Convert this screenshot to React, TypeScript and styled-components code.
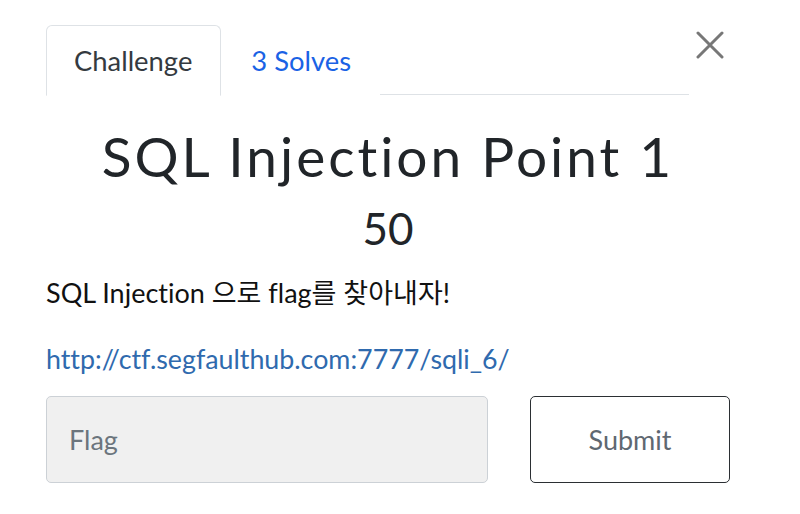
import React, {useState} from 'react';
import styled, {createGlobalStyle} from "styled-components";

const GlobalStyle = createGlobalStyle`
    body {
        margin: 0;
        background: #fff;
        font-family: Lato, "Noto Sans CJK KR", sans-serif;
        color: #212529;
        font-variant-ligatures: no-common-ligatures;
    }
`;

const Modal = styled.div`
    display: flex;
    flex-direction: column;
    width: 684px;
    padding: 25px 0 0 46px;
`;

const Header = styled.div`
    display: flex;
    align-items: flex-start;
    height: 70px;
`;

const TabNav = styled.div`
    display: flex;
    width: 643px;
    height: 70px;
    border-bottom: 1px solid #dee2e6;
    box-sizing: border-box;
`;

const Tab = styled.div<{ $active?: boolean }>`
    display: flex;
    align-items: center;
    justify-content: center;
    height: 71px;
    box-sizing: border-box;
    padding: 0 28px 0 ${p => p.$active ? 27 : 29}px;
    font-size: 27.4px;
    color: ${p => p.$active ? '#343a40' : '#1a62e5'};
    background: #fff;
    border: 1px solid ${p => p.$active ? '#dee2e6' : 'transparent'};
    border-bottom-color: ${p => p.$active ? '#fff' : 'transparent'};
    border-radius: 6px 6px 0 0;
    cursor: pointer;
`;

const CloseButton = styled.button`
    display: flex;
    margin: 6px 0 0 7px;
    padding: 0;
    border: 0;
    background: none;
    cursor: pointer;
`;

const Title = styled.h1`
    margin: 28px 0 0;
    text-align: center;
    font-size: 55px;
    font-weight: 400;
    letter-spacing: 3px;
    line-height: 66px;
`;

const Points = styled.h2`
    margin: 13px 0 0;
    text-align: center;
    font-size: 44px;
    font-weight: 400;
    line-height: 52px;
`;

const Description = styled.p`
    margin: 21px 0 0;
    font-size: 27px;
    line-height: 36px;
    color: #111;
`;

const Link = styled.a`
    margin-top: 30px;
    font-size: 26.8px;
    line-height: 36px;
    color: #2f6aae;
    text-decoration: none;
`;

const Form = styled.form`
    display: flex;
    justify-content: space-between;
    margin-top: 19px;
`;

const FlagInput = styled.input`
    width: 442px;
    height: 87px;
    box-sizing: border-box;
    padding: 0 22px;
    font-family: inherit;
    font-size: 27px;
    color: #495057;
    background: #f0f0f0;
    border: 1px solid #ccd1d6;
    border-radius: 5px;
    outline: none;

    &::placeholder {
        color: #6c757d;
    }
`;

const SubmitButton = styled.button`
    width: 200px;
    height: 87px;
    font-family: inherit;
    font-size: 27px;
    color: #5f6871;
    background: #fff;
    border: 1px solid #2b2f33;
    border-radius: 5px;
    cursor: pointer;
`;

function App() {
    const [tab, setTab] = useState('challenge');
    const [flag, setFlag] = useState('');
    return (
        <>
            <GlobalStyle/>
            <Modal>
                <Header>
                    <TabNav>
                        <Tab $active={tab === 'challenge'} onClick={() => setTab('challenge')}>Challenge</Tab>
                        <Tab $active={tab === 'solves'} onClick={() => setTab('solves')}>3 Solves</Tab>
                    </TabNav>
                    <CloseButton aria-label="Close">
                        <svg width="28" height="28" viewBox="0 0 28 28">
                            <path d="M2 2L26 26M26 2L2 26" stroke="#777" strokeWidth="3" strokeLinecap="round"/>
                        </svg>
                    </CloseButton>
                </Header>
                <Title>SQL Injection Point 1</Title>
                <Points>50</Points>
                <Description>SQL Injection 으로 flag를 찾아내자!</Description>
                <Link href="http://ctf.segfaulthub.com:7777/sqli_6/">http://ctf.segfaulthub.com:7777/sqli_6/</Link>
                <Form onSubmit={e => e.preventDefault()}>
                    <FlagInput placeholder="Flag" value={flag} onChange={e => setFlag(e.target.value)}/>
                    <SubmitButton type="submit">Submit</SubmitButton>
                </Form>
            </Modal>
        </>
    );
}

export default App;
